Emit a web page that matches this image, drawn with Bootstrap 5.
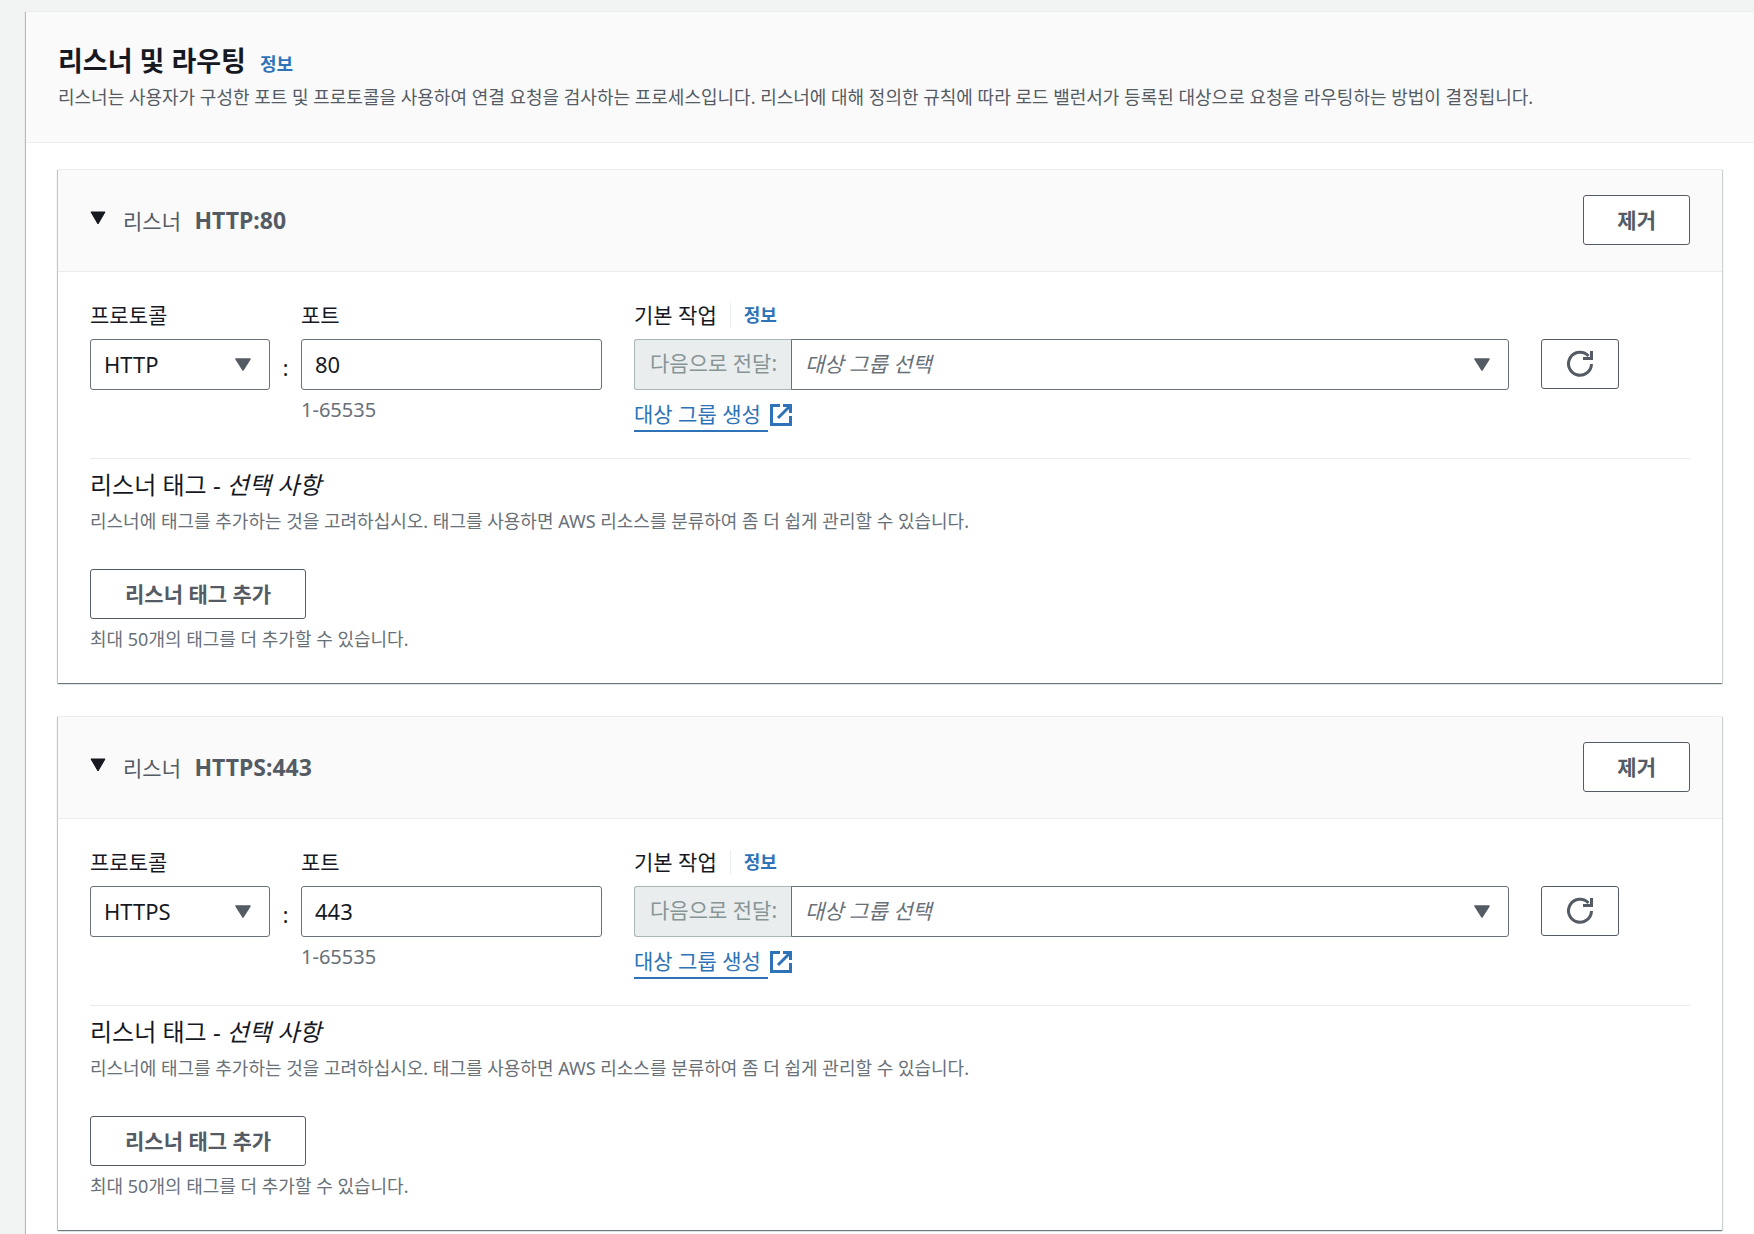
<!DOCTYPE html>
<html lang="ko">
<head>
<meta charset="utf-8">
<meta name="viewport" content="width=device-width, initial-scale=1">
<title>리스너 및 라우팅</title>
<link href="https://cdn.jsdelivr.net/npm/bootstrap@5.3.0/dist/css/bootstrap.min.css" rel="stylesheet">
<style>
  :root {
    --ink: #16191f;
    --slate: #545b64;
    --muted: #687078;
    --line: #eaeded;
    --blue: #2e73b8;
  }
  body {
    background: #f2f3f3;
    color: var(--ink);
    font-family: "Noto Sans", "Noto Sans CJK KR", sans-serif;
    font-size: 21px;
    line-height: 28px;
    padding: 11px 0 0 26px;
  }
  .panel, .listener {
    background: #fff;
    border-top: 1px solid var(--line);
    box-shadow: 0 1px 1px 0 rgba(0, 28, 36, .4), 1px 1px 1px 0 rgba(0, 28, 36, .15), -1px 1px 1px 0 rgba(0, 28, 36, .2);
  }
  .panel-head, .listener-head { background: #fafafa; border-bottom: 1px solid var(--line); }
  .panel-head { padding: 33px 32px; }
  .panel-head h1 { font-size: 27px; line-height: 32px; font-weight: 700; margin-bottom: 8px; }
  .panel-head .info-link { margin-left: 14px; }
  .panel-body { padding: 26px 32px 5px; gap: 33px; }
  .listener-head { padding: 25px 32px 26px; }
  .listener-body { padding: 29px 32px 32px; }
  .text-small { font-size: 18px; line-height: 24px; }
  .text-slate { color: var(--slate); }
  .text-faint { color: var(--muted); }
  .info-link { font-size: 18px; font-weight: 700; color: var(--blue); text-decoration: none; }
  .toggle { border: 0; background: none; padding: 0; line-height: 28px; font-size: 21px; color: var(--slate); gap: 17px; }
  .toggle strong { font-size: 23px; }
  .btn-plain {
    --bs-btn-color: var(--slate);
    --bs-btn-bg: #fff;
    --bs-btn-border-color: var(--slate);
    --bs-btn-hover-color: var(--ink);
    --bs-btn-hover-bg: #fafafa;
    --bs-btn-hover-border-color: var(--ink);
    --bs-btn-font-size: 21px;
    --bs-btn-font-weight: 700;
    --bs-btn-line-height: 28px;
    --bs-btn-padding-y: 10px;
    --bs-btn-padding-x: 33px;
    --bs-btn-border-radius: 3px;
  }
  .btn-refresh { --bs-btn-padding-x: 25px; }
  .form-control, .form-select {
    height: 51px;
    border-color: var(--muted);
    border-radius: 3px;
    color: var(--ink);
    font-size: 22px;
    line-height: 28px;
    padding: 9px 13px 11px;
  }
  .form-select {
    --bs-form-select-bg-img: url("data:image/svg+xml,%3Csvg xmlns='http://www.w3.org/2000/svg' viewBox='0 0 16 13'%3E%3Cpath d='M1 1h14L8 12z' fill='%23545b64' stroke='%23545b64' stroke-width='1.5' stroke-linejoin='round'/%3E%3C/svg%3E");
    background-size: 16px 13px;
    background-position: right 18px center;
    padding-right: 40px;
  }
  .form-select.unset { color: var(--muted); font-style: italic; font-size: 21px; }
  .input-group-text {
    background: var(--line);
    border-color: #aab7b8;
    border-right: 0;
    border-radius: 3px;
    color: #879596;
    font-size: 21px;
    line-height: 28px;
    padding: 8px 15px 12px 15px;
  }
  .col-protocol { flex: 0 0 180px; }
  .colon { flex: 0 0 31px; padding-top: 53px; }
  .col-port { flex: 301 1 0; margin-right: 32px; }
  .port-range { font-size: 20px; line-height: 24px; }
  .col-action { flex: 875 1 0; margin-right: 32px; }
  .col-refresh { padding-top: 38px; margin-right: 71px; }
  .field-label { margin-bottom: 10px; line-height: 28px; }
  .label-info { border-left: 1px solid var(--line); margin-left: 13px; padding-left: 13px; line-height: 24px; }
  .create-link { color: var(--blue); text-decoration: none; margin-top: 8px; gap: 2px; }
  .create-link span { border-bottom: 2px solid var(--blue); line-height: 32px; padding-right: 7px; }
  .rule { border-top: 1px solid var(--line); margin-top: 26px; padding-top: 8px; }
  .rule h2 { font-size: 24px; line-height: 36px; font-weight: 400; margin-bottom: 6px; }
  .add-tag { --bs-btn-padding-x: 34px; margin-top: 36px; }
</style>
</head>
<body>
<main class="panel">
  <header class="panel-head">
    <div class="d-flex align-items-baseline">
      <h1>리스너 및 라우팅</h1>
      <a class="info-link" href="#">정보</a>
    </div>
    <p class="text-small text-slate mb-0">리스너는 사용자가 구성한 포트 및 프로토콜을 사용하여 연결 요청을 검사하는 프로세스입니다. 리스너에 대해 정의한 규칙에 따라 로드 밸런서가 등록된 대상으로 요청을 라우팅하는 방법이 결정됩니다.</p>
  </header>

  <div class="panel-body d-flex flex-column">
    <section class="listener">
      <header class="listener-head d-flex justify-content-between align-items-center">
        <button type="button" class="toggle d-flex align-items-center" aria-expanded="true">
          <svg class="mb-1" width="16" height="14" viewBox="0 0 16 14" aria-hidden="true"><path d="M1 1h14L8 13z" fill="#16191f" stroke="#16191f" stroke-linejoin="round"/></svg>
          <span>리스너 <strong class="ms-2">HTTP:80</strong></span>
        </button>
        <button type="button" class="btn btn-plain">제거</button>
      </header>
      <div class="listener-body">
        <div class="d-flex align-items-start">
          <div class="col-protocol">
            <label class="field-label d-block" for="protocol-1">프로토콜</label>
            <select class="form-select" id="protocol-1"><option selected>HTTP</option><option>HTTPS</option></select>
          </div>
          <div class="colon text-center">:</div>
          <div class="col-port">
            <label class="field-label d-block" for="port-1">포트</label>
            <input class="form-control" id="port-1" type="text" inputmode="numeric" value="80" aria-describedby="range-1">
            <div class="port-range text-faint mt-2" id="range-1">1-65535</div>
          </div>
          <div class="col-action">
            <div class="field-label d-flex align-items-center">
              <label for="target-1">기본 작업</label>
              <a class="info-link label-info" href="#">정보</a>
            </div>
            <div class="input-group">
              <span class="input-group-text">다음으로 전달:</span>
              <select class="form-select unset" id="target-1"><option selected>대상 그룹 선택</option></select>
            </div>
            <a class="create-link d-inline-flex align-items-center" href="#">
              <span>대상 그룹 생성</span>
              <svg width="22" height="22" viewBox="0 0 22 22" fill="none" stroke="currentColor" stroke-width="3" aria-hidden="true"><path d="M10 1.500H1.500V20.500H20.500V12M13 1.500H20.500V9M20 2L8 14"/></svg>
            </a>
          </div>
          <div class="col-refresh">
            <button type="button" class="btn btn-plain btn-refresh d-flex align-items-center" aria-label="새로 고침">
              <svg width="26" height="28" viewBox="0 0 26 28" fill="none" stroke="currentColor" stroke-width="3" aria-hidden="true"><path d="M24.500 14A11.500 11.500 0 1 1 21.500 6M24.500 1V8.500H16"/></svg>
            </button>
          </div>
        </div>
        <div class="rule">
          <h2>리스너 태그 - <em>선택 사항</em></h2>
          <p class="text-small text-faint mb-0">리스너에 태그를 추가하는 것을 고려하십시오. 태그를 사용하면 AWS 리소스를 분류하여 좀 더 쉽게 관리할 수 있습니다.</p>
          <button type="button" class="btn btn-plain add-tag">리스너 태그 추가</button>
          <p class="text-small text-faint mt-2 mb-0">최대 50개의 태그를 더 추가할 수 있습니다.</p>
        </div>
      </div>
    </section>

    <section class="listener">
      <header class="listener-head d-flex justify-content-between align-items-center">
        <button type="button" class="toggle d-flex align-items-center" aria-expanded="true">
          <svg class="mb-1" width="16" height="14" viewBox="0 0 16 14" aria-hidden="true"><path d="M1 1h14L8 13z" fill="#16191f" stroke="#16191f" stroke-linejoin="round"/></svg>
          <span>리스너 <strong class="ms-2">HTTPS:443</strong></span>
        </button>
        <button type="button" class="btn btn-plain">제거</button>
      </header>
      <div class="listener-body">
        <div class="d-flex align-items-start">
          <div class="col-protocol">
            <label class="field-label d-block" for="protocol-2">프로토콜</label>
            <select class="form-select" id="protocol-2"><option>HTTP</option><option selected>HTTPS</option></select>
          </div>
          <div class="colon text-center">:</div>
          <div class="col-port">
            <label class="field-label d-block" for="port-2">포트</label>
            <input class="form-control" id="port-2" type="text" inputmode="numeric" value="443" aria-describedby="range-2">
            <div class="port-range text-faint mt-2" id="range-2">1-65535</div>
          </div>
          <div class="col-action">
            <div class="field-label d-flex align-items-center">
              <label for="target-2">기본 작업</label>
              <a class="info-link label-info" href="#">정보</a>
            </div>
            <div class="input-group">
              <span class="input-group-text">다음으로 전달:</span>
              <select class="form-select unset" id="target-2"><option selected>대상 그룹 선택</option></select>
            </div>
            <a class="create-link d-inline-flex align-items-center" href="#">
              <span>대상 그룹 생성</span>
              <svg width="22" height="22" viewBox="0 0 22 22" fill="none" stroke="currentColor" stroke-width="3" aria-hidden="true"><path d="M10 1.500H1.500V20.500H20.500V12M13 1.500H20.500V9M20 2L8 14"/></svg>
            </a>
          </div>
          <div class="col-refresh">
            <button type="button" class="btn btn-plain btn-refresh d-flex align-items-center" aria-label="새로 고침">
              <svg width="26" height="28" viewBox="0 0 26 28" fill="none" stroke="currentColor" stroke-width="3" aria-hidden="true"><path d="M24.500 14A11.500 11.500 0 1 1 21.500 6M24.500 1V8.500H16"/></svg>
            </button>
          </div>
        </div>
        <div class="rule">
          <h2>리스너 태그 - <em>선택 사항</em></h2>
          <p class="text-small text-faint mb-0">리스너에 태그를 추가하는 것을 고려하십시오. 태그를 사용하면 AWS 리소스를 분류하여 좀 더 쉽게 관리할 수 있습니다.</p>
          <button type="button" class="btn btn-plain add-tag">리스너 태그 추가</button>
          <p class="text-small text-faint mt-2 mb-0">최대 50개의 태그를 더 추가할 수 있습니다.</p>
        </div>
      </div>
    </section>
  </div>
</main>
<script src="https://cdn.jsdelivr.net/npm/bootstrap@5.3.0/dist/js/bootstrap.bundle.min.js"></script>
</body>
</html>
